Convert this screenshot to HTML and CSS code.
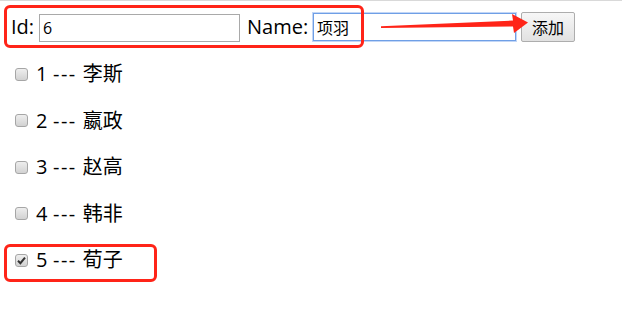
FILE: index.html
```html
<!DOCTYPE html>
<html lang="zh-CN">
<head>
  <meta charset="UTF-8" />
  <title>添加人物</title>
  <link rel="stylesheet" href="styles.css">
</head>
<body>
  <div class="add-row">
    <label class="lbl-id" for="idInput">Id:</label>
    <input id="idInput" class="field" type="text" value="6">
    <label class="lbl-name" for="nameInput">Name:</label>
    <input id="nameInput" class="field field-focus" type="text" value="项羽">
    <button class="add-btn">添加</button>
  </div>

  <ul class="person-list">
    <li><span class="chk"></span><span class="num">1</span><span class="sep">---</span>李斯</li>
    <li><span class="chk"></span><span class="num">2</span><span class="sep">---</span>嬴政</li>
    <li><span class="chk"></span><span class="num">3</span><span class="sep">---</span>赵高</li>
    <li><span class="chk"></span><span class="num">4</span><span class="sep">---</span>韩非</li>
    <li>
      <span class="chk chk-on">
        <svg width="13" height="13" viewBox="0 0 13 13"><path d="M3 6.8 L5.4 9.2 L10 3.6" fill="none" stroke="#333" stroke-width="2"/></svg>
      </span><span class="num">5</span><span class="sep">---</span>荀子
    </li>
  </ul>

  <!-- annotations drawn over the screenshot -->
  <div class="mark mark-top"></div>
  <div class="mark mark-last"></div>
  <svg class="arrow" width="622" height="60" viewBox="0 0 622 60">
    <polygon points="381,26.3 513,20.5 512,14 528,22.5 514,33 513,26.5 381,28" fill="#ff2418"/>
  </svg>
</body>
</html>
```

FILE: styles.css
```css
body {
  margin: 0;
  border-top: 1px solid #d9d9d9;
  font-family: "Open Sans", "Noto Sans CJK SC", sans-serif;
  color: #000;
  background: #fff;
  position: relative;
  height: 315px;
}

.add-row {
  display: flex;
  align-items: baseline;
  padding: 11px 0 0 11px;
  font-size: 20px;
  line-height: 26px;
}

.lbl-id {
  width: 28px;
}

.lbl-name {
  width: 66px;
}

.field {
  box-sizing: border-box;
  width: 201px;
  height: 28px;
  margin-right: 7px;
  padding: 1px 3px;
  border: 1px solid #a9a9a9;
  font-family: "Open Sans", "Noto Sans CJK SC", sans-serif;
  font-size: 16px;
  outline: none;
}

.field-focus {
  width: 203px;
  margin-right: 5px;
  border-color: #6f9fe6;
  box-shadow: 0 0 0 1px rgba(120, 165, 235, 0.45);
}

.add-btn {
  box-sizing: border-box;
  width: 54px;
  height: 30px;
  padding: 0;
  border: 1px solid #adadad;
  border-radius: 2px;
  background: linear-gradient(#f7f7f7, #e1e1e1);
  font-family: "Noto Sans CJK SC", sans-serif;
  font-size: 16px;
}

.person-list {
  list-style: none;
  margin: 0;
  padding: 19px 0 0 15px;
  display: flex;
  flex-direction: column;
  gap: 20.5px;
  font-size: 20px;
  line-height: 26px;
}

.person-list li {
  display: flex;
  align-items: center;
}

.num {
  width: 17px;
}

.sep {
  letter-spacing: 1.5px;
  margin-right: 6px;
}

.chk {
  box-sizing: border-box;
  width: 13px;
  height: 13px;
  margin-right: 8px;
  border: 1px solid #a6a6a6;
  border-radius: 3px;
  background: linear-gradient(#eeeeee, #d2d2d2);
  display: flex;
}

.chk svg {
  margin: -1px;
}

.mark {
  position: absolute;
  box-sizing: border-box;
  border: 3px solid #ff2418;
  border-radius: 6px;
}

.mark-top {
  left: 4px;
  top: 4px;
  width: 360px;
  height: 43px;
}

.mark-last {
  left: 4px;
  top: 243px;
  width: 153px;
  height: 38px;
}

.arrow {
  position: absolute;
  left: 0;
  top: -1px;
}
```
